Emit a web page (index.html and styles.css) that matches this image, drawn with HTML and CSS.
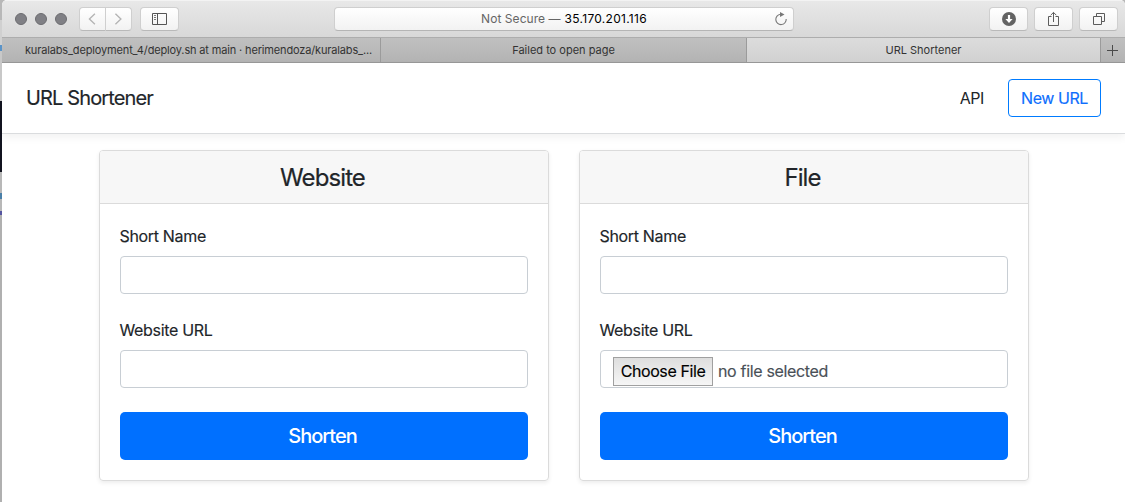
FILE: index.html
```html
<!DOCTYPE html>
<html lang="en">
<head>
<meta charset="utf-8">
<title>URL Shortener</title>
<link rel="stylesheet" href="styles.css">
</head>
<body>
<div class="desktop">
<div class="window">
  <div class="toolbar">
    <div class="lights"><i></i><i></i><i></i></div>
    <div class="nav-group">
      <div class="tool nav-btn"><svg width="26" height="22" viewBox="0 0 26 22"><path d="M15.500 5.500 9.800 11l5.700 5.500" fill="none" stroke="#b4b4b4" stroke-width="1.4"/></svg></div>
      <div class="tool nav-btn"><svg width="26" height="22" viewBox="0 0 26 22"><path d="M9.800 5.500 15.500 11l-5.700 5.500" fill="none" stroke="#b4b4b4" stroke-width="1.4"/></svg></div>
    </div>
    <div class="tool sidebar-btn"><svg width="15" height="12" viewBox="0 0 15 12"><g fill="none" stroke="#555"><path d="M.5.5h14v11H.5zM5.500.5v11"/><path d="M2 2.500h2M2 4.500h2M2 6.500h2" stroke="#777"/></g></svg></div>
    <div class="address">
      <span class="insecure">Not Secure —</span><span class="host">35.170.201.116</span>
      <svg class="reload" width="14" height="14" viewBox="0 0 14 14"><path d="M6.500 2.200A5.200 5.200 0 1 0 12.200 7" fill="none" stroke="#777" stroke-width="1.1"/><path d="M6 0l4.500 2.400L6 5z" fill="#777"/></svg>
    </div>
    <div class="actions">
      <div class="tool"><svg width="14" height="14" viewBox="0 0 14 14"><circle cx="7" cy="7" r="7" fill="#636363"/><path d="M5.900 3h2.200v4h2.500L7 11 3.400 7h2.500z" fill="#fff"/></svg></div>
      <div class="tool"><svg width="12" height="16" viewBox="0 0 12 16"><path d="M3.500 5.500h-3v9h10v-9h-3M5.500 11V1.500M2.700 4.200l2.800-2.800 2.800 2.800" fill="none" stroke="#5c5c5c"/></svg></div>
      <div class="tool"><svg width="12" height="12" viewBox="0 0 12 12"><path d="M.5 3.500h8v8h-8zM3.500 3.500v-3h8v8h-3" fill="none" stroke="#5c5c5c"/></svg></div>
    </div>
  </div>
  <div class="tabs">
    <div class="tab tab-repo"><span>kuralabs_deployment_4/deploy.sh at main · herimendoza/kuralabs_...</span></div>
    <div class="tab tab-failed"><span>Failed to open page</span></div>
    <div class="tab tab-active"><span>URL Shortener</span></div>
    <div class="tab tab-new"><svg width="11" height="11" viewBox="0 0 11 11"><path d="M5.500 0v11M0 5.500h11" stroke="#4a4a4a"/></svg></div>
  </div>
  <header class="site-header">
    <h1 class="brand">URL Shortener</h1>
    <a class="api-link">API</a>
    <a class="new-url"><span>New URL</span></a>
  </header>
  <main class="cards">
    <section class="card">
      <h2 class="card-header">Website</h2>
      <form class="card-body">
        <label class="label">Short Name</label>
        <div class="input"></div>
        <label class="label">Website URL</label>
        <div class="input"></div>
        <button class="submit" type="button">Shorten</button>
      </form>
    </section>
    <section class="card">
      <h2 class="card-header">File</h2>
      <form class="card-body">
        <label class="label">Short Name</label>
        <div class="input"></div>
        <label class="label">Website URL</label>
        <div class="input file"><div class="choose">Choose File</div><span class="nofile">no file selected</span></div>
        <button class="submit" type="button">Shorten</button>
      </form>
    </section>
  </main>
</div>
</div>
</body>
</html>
```
FILE: styles.css
```css
* { box-sizing: border-box; }
body { margin: 0; font-family: Inter, "Liberation Sans", sans-serif; font-size: 16px; line-height: 24px; color: #212529; overflow: hidden; }
span, a, h1 { white-space: nowrap; }
.desktop { height: 502px; padding-left: 2px; background: linear-gradient(#b8b8b8 0 20px, #d0d0d0 20px 45px, #5b94c8 45px 51px, #c8c8c8 51px 101px, #11131f 101px 172px, #b8b8b8 172px 193px, #4a7fa8 193px 199px, #b8b8b8 199px 211px, #5555a0 211px 215px, #b0b0b0 215px); }
.window { height: 502px; background: #fff; border-top-left-radius: 5px; border-top-right-radius: 5px; overflow: hidden; }
.toolbar { height: 38px; display: flex; align-items: center; padding: 1px 7px 0 13px; background: linear-gradient(#f3f3f3 0 1px, #e8e8e8 1px, #d8d8d8); border-bottom: 1px solid #adadad; }
.lights { display: flex; gap: 8px; width: 64px; }
.lights i { width: 12px; height: 12px; border-radius: 50%; background: #808085; border: 1px solid #6c6c70; }
.tool { width: 39px; height: 24px; border-radius: 4px; border: 1px solid #cfcfcf; border-bottom-color: #b9b9b9; background: linear-gradient(#fff, #f2f2f2); display: flex; align-items: center; justify-content: center; }
.nav-group { display: flex; width: 61px; }
.nav-btn { width: 27px; border-radius: 4px 0 0 4px; }
.nav-btn + .nav-btn { width: 26px; border-left: 0; border-radius: 0 4px 4px 0; }
.address { width: 460px; height: 24px; margin-left: 155px; border: 1px solid #cfcfcf; border-bottom-color: #b5b5b5; border-radius: 4px; background: linear-gradient(#fff, #f2f2f2); position: relative; display: flex; gap: 4px; align-items: center; justify-content: center; font-size: 12px; line-height: 24px; }
.insecure { color: #666; letter-spacing: .05px; }
.host { color: #000; letter-spacing: .28px; }
.reload { position: absolute; right: 5px; top: 4px; }
.actions { margin-left: auto; display: flex; gap: 6px; }
.tabs { height: 25px; display: flex; background: linear-gradient(#c0c0c0, #b3b3b3); border-bottom: 1px solid #989898; font-size: 11px; line-height: 24px; color: #333; }
.tab { display: flex; justify-content: center; border-right: 1px solid #9b9b9b; }
.tab-repo { width: 379px; padding-left: 15px; letter-spacing: -.15px; }
.tab-failed { width: 366px; }
.tab-active { width: 354px; background: linear-gradient(#dcdcdc, #d1d1d1); }
.tab-new { flex: 1; align-items: center; border-right: 0; padding-right: 1px; }
.site-header { height: 71px; display: flex; align-items: center; padding: 0 24px; border-bottom: 1px solid #dadcde; box-shadow: 0 4px 8px rgba(0,0,0,.05); }
.brand { margin: 0 auto 0 0; font-weight: 400; font-size: 20px; letter-spacing: -.86px; -webkit-text-stroke: .15px; }
.api-link { margin-right: 24px; letter-spacing: -.4px; }
.new-url { width: 93px; height: 38px; border: 1px solid #007bff; border-radius: 4px; color: #0d6efd; line-height: 36px; text-align: center; letter-spacing: -.45px; -webkit-text-stroke: .15px; }
.cards { display: flex; gap: 30px; padding: 16px 0 0 97px; }
.card { width: 450px; height: 331px; border: 1px solid #dbdbdb; border-radius: 4px; box-shadow: 0 2px 4px rgba(0,0,0,.075); }
.card-header { margin: 0; padding-right: 3px; height: 53px; line-height: 54px; background: #f7f7f7; border-bottom: 1px solid #dbdbdb; border-radius: 3px 3px 0 0; text-align: center; font-size: 24px; font-weight: 400; letter-spacing: -.9px; -webkit-text-stroke: .2px; }
.card-body { padding: 20px; }
.label { display: block; height: 24px; margin: 0 0 8px -.5px; letter-spacing: -.33px; -webkit-text-stroke: .15px; }
.input { height: 38px; border: 1px solid #c8ced4; border-radius: 4px; margin-bottom: 24px; }
.file { display: flex; padding: 6px 12px 0; color: #495057; }
.choose { width: 100px; height: 29px; border: 1px solid #a0a0a0; background: linear-gradient(#dedede, #f6f6f6); color: #000; text-align: center; line-height: 27px; letter-spacing: -.4px; -webkit-text-stroke: .15px; }
.nofile { margin-left: 5px; line-height: 29px; letter-spacing: -.33px; -webkit-text-stroke: .15px; }
.submit { display: block; width: 100%; height: 48px; padding: 0 3px 0 0; border: 0; border-radius: 5px; background: #0070ff; color: #fff; font: 500 20px/48px Inter, sans-serif; letter-spacing: -1px; }
```
